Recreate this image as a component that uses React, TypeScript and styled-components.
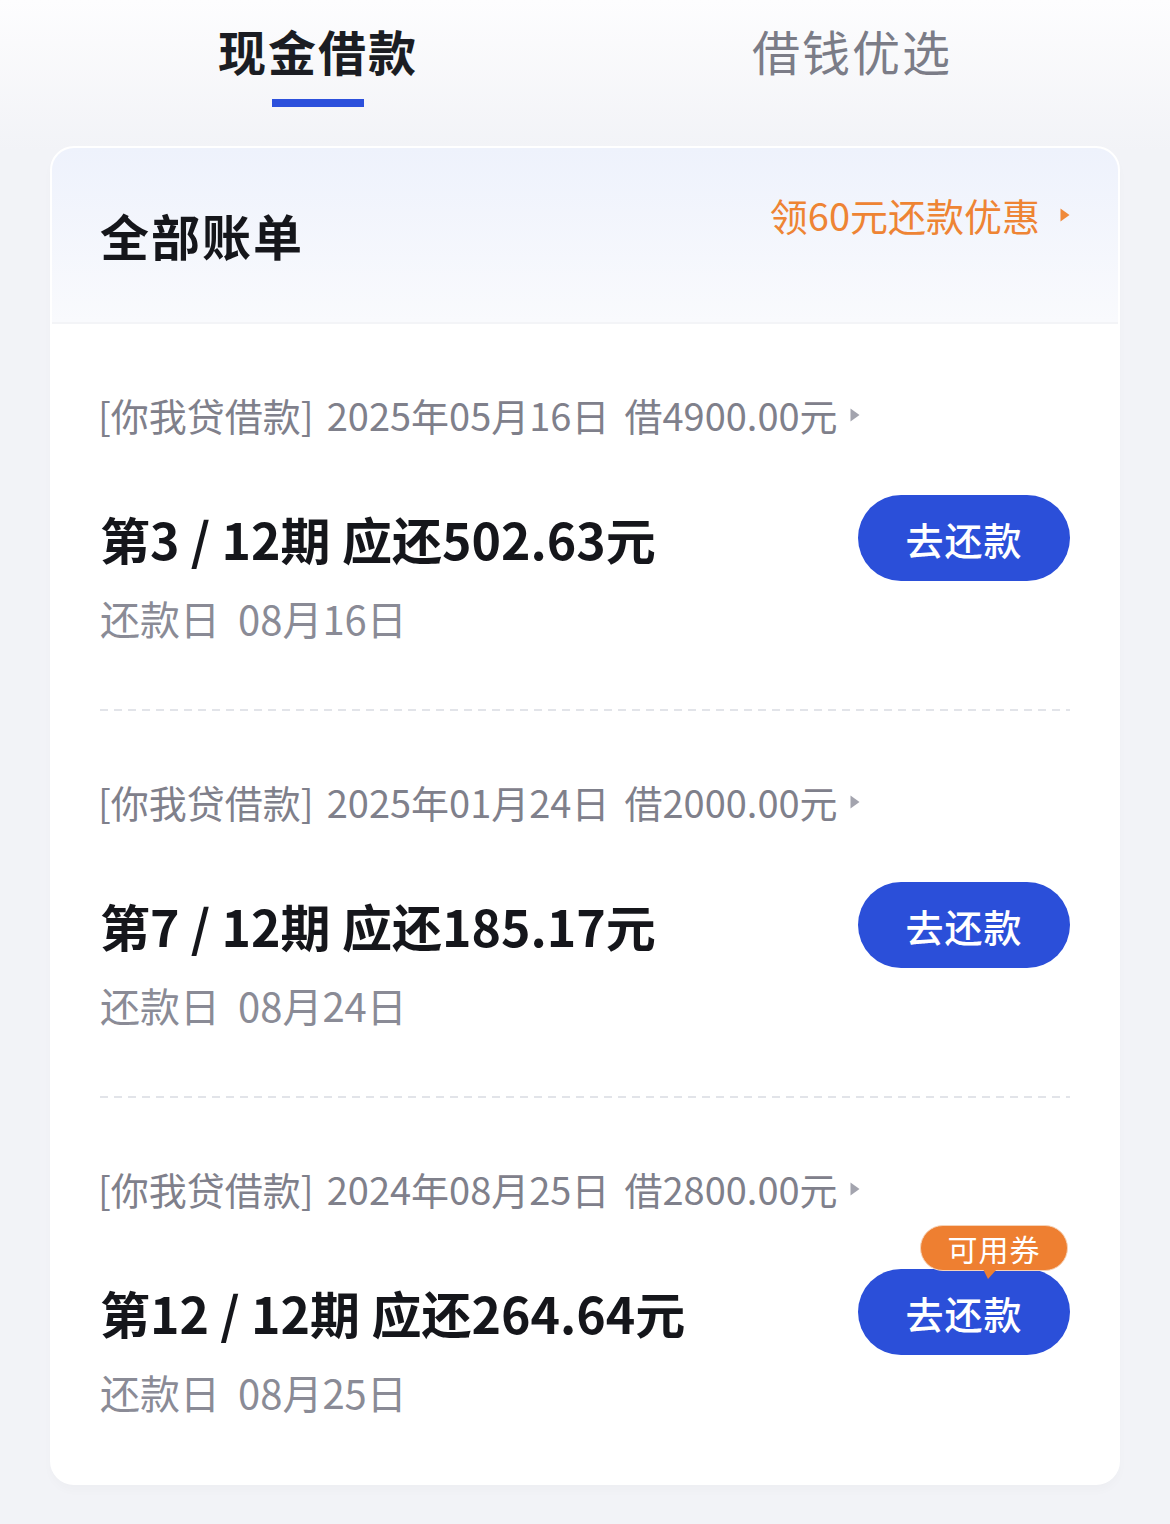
import React from 'react';
import styled, { createGlobalStyle } from 'styled-components';

const GlobalStyle = createGlobalStyle`
  html, body {
    margin: 0;
    padding: 0;
  }
  body {
    background: linear-gradient(180deg, #fdfdfe 0px, #f2f3f7 150px, #f2f3f7 100%);
    font-family: "Noto Sans CJK SC", "Noto Sans", sans-serif;
    -webkit-font-smoothing: antialiased;
  }
`;

interface Bill {
  borrowDate: string;
  amount: string;
  period: string;
  due: string;
  dueDate: string;
  coupon?: boolean;
}

const bills: Bill[] = [
  { borrowDate: '2025年05月16日', amount: '4900.00', period: '3/12', due: '502.63', dueDate: '08月16日' },
  { borrowDate: '2025年01月24日', amount: '2000.00', period: '7/12', due: '185.17', dueDate: '08月24日' },
  { borrowDate: '2024年08月25日', amount: '2800.00', period: '12/12', due: '264.64', dueDate: '08月25日', coupon: true },
];

const App: React.FC = () => {
  const [active, setActive] = React.useState(0);
  const tabs = ['现金借款', '借钱优选'];

  return (
    <StyledPage>
      <GlobalStyle />
      <StyledTabs>
        {tabs.map((t, i) => (
          <StyledTab key={t} onClick={() => setActive(i)}>
            <StyledTabLabel $active={active === i}>{t}</StyledTabLabel>
            <StyledTabLine $active={active === i} />
          </StyledTab>
        ))}
      </StyledTabs>

      <StyledCard>
        <StyledCardHeader>
          <StyledCardTitle>全部账单</StyledCardTitle>
          <StyledPromo>
            领60元还款优惠
            <Triangle color="#f08a3a" />
          </StyledPromo>
        </StyledCardHeader>

        {bills.map((b, i) => (
          <React.Fragment key={b.borrowDate}>
            {i > 0 && <StyledDivider />}
            <StyledBillRow $last={i === bills.length - 1}>
              <StyledMeta>
                <span>[你我贷借款]</span>
                <StyledMetaPart>{b.borrowDate}</StyledMetaPart>
                <StyledMetaPart $wide>借{b.amount}元</StyledMetaPart>
                <Triangle color="#a3a4ae" />
              </StyledMeta>
              <StyledMain>
                <StyledAmount>
                  第{b.period.replace('/', ' / ')}期 应还{b.due}元
                </StyledAmount>
                <StyledPayButton>
                  去还款
                  {b.coupon && <StyledCoupon>可用券</StyledCoupon>}
                </StyledPayButton>
              </StyledMain>
              <StyledDueDate>
                还款日<StyledDueValue>{b.dueDate}</StyledDueValue>
              </StyledDueDate>
            </StyledBillRow>
          </React.Fragment>
        ))}
      </StyledCard>
    </StyledPage>
  );
};

const Triangle: React.FC<{ color: string }> = ({ color }) => (
  <StyledTriangle viewBox="0 0 10 14" width="10" height="14">
    <path d="M0.5 0.5 L9.5 7 L0.5 13.5 Z" fill={color} />
  </StyledTriangle>
);

const StyledPage = styled.div`
  min-height: 1524px;
  box-sizing: border-box;
  padding-bottom: 36px;
`;

const StyledTabs = styled.div`
  display: flex;
  justify-content: center;
  height: 146px;
`;

const StyledTab = styled.div`
  width: 534px;
  display: flex;
  flex-direction: column;
  align-items: center;
  padding-top: 20px;
  cursor: pointer;
`;

const StyledTabLabel = styled.div<{ $active: boolean }>`
  font-size: 48px;
  line-height: 60px;
  letter-spacing: 2px;
  font-weight: ${p => (p.$active ? 700 : 400)};
  color: ${p => (p.$active ? '#1b1d23' : '#7b7c87')};
`;

const StyledTabLine = styled.div<{ $active: boolean }>`
  width: 92px;
  height: 8px;
  margin-top: 19px;
  background: ${p => (p.$active ? '#2c50dc' : 'transparent')};
`;

const StyledCard = styled.div`
  margin: 0 50px;
  border: 2px solid #ffffff;
  border-radius: 24px;
  background: #ffffff;
  overflow: hidden;
  box-shadow: 0 6px 10px rgba(20, 30, 60, 0.02);
`;

const StyledCardHeader = styled.div`
  height: 176px;
  box-sizing: border-box;
  display: flex;
  justify-content: space-between;
  align-items: flex-start;
  padding: 45px 48px 0;
  background: linear-gradient(180deg, #eef2fc 0%, #f9fafd 100%);
  border-bottom: 2px solid #f3f4f7;
`;

const StyledCardTitle = styled.div`
  margin-top: 16px;
  font-size: 49px;
  line-height: 52px;
  font-weight: 700;
  color: #15161b;
  letter-spacing: 2px;
`;

const StyledPromo = styled.div`
  display: flex;
  align-items: center;
  gap: 20px;
  font-size: 38px;
  line-height: 44px;
  color: #ee8434;
`;

const StyledTriangle = styled.svg`
  flex-shrink: 0;
`;

const StyledDivider = styled.div`
  margin: 0 48px;
  height: 2px;
  background: repeating-linear-gradient(90deg, #e2e4e9 0 8px, transparent 8px 14px);
`;

const StyledBillRow = styled.div<{ $last: boolean }>`
  display: flex;
  flex-direction: column;
  padding: 68px 48px ${p => (p.$last ? '68px' : '68px')};
`;

const StyledMeta = styled.div`
  display: flex;
  align-items: center;
  margin-left: -2px;
  font-size: 38px;
  line-height: 46px;
  color: #7f808b;
  white-space: nowrap;

  svg {
    margin-left: 12px;
  }
`;

const StyledMetaPart = styled.span<{ $wide?: boolean }>`
  margin-left: ${p => (p.$wide ? '15px' : '13px')};
`;

const StyledMain = styled.div`
  display: flex;
  justify-content: space-between;
  align-items: center;
  margin-top: 57px;
`;

const StyledAmount = styled.div`
  font-size: 50px;
  line-height: 60px;
  font-weight: 700;
  color: #15161b;
  white-space: nowrap;
`;

const StyledPayButton = styled.button`
  position: relative;
  width: 212px;
  height: 86px;
  border: none;
  border-radius: 43px;
  background: #2b4fd9;
  color: #ffffff;
  font-family: inherit;
  font-size: 38px;
  font-weight: 500;
  letter-spacing: 1px;
  cursor: pointer;
`;

const StyledCoupon = styled.span`
  position: absolute;
  top: -44px;
  right: 2px;
  width: 148px;
  height: 46px;
  box-sizing: border-box;
  border: 1px solid #f6d3b8;
  border-radius: 23px;
  background: #ee7f31;
  color: #ffffff;
  font-size: 30px;
  line-height: 44px;
  font-weight: 400;
  letter-spacing: 1px;

  &::after {
    content: '';
    position: absolute;
    left: 62px;
    bottom: -9px;
    border-left: 5px solid transparent;
    border-right: 9px solid transparent;
    border-top: 10px solid #ee7f31;
  }
`;

const StyledDueDate = styled.div`
  margin-top: 14px;
  font-size: 40px;
  line-height: 46px;
  color: #8a8b96;
`;

const StyledDueValue = styled.span`
  margin-left: 18px;
`;

export default App;
